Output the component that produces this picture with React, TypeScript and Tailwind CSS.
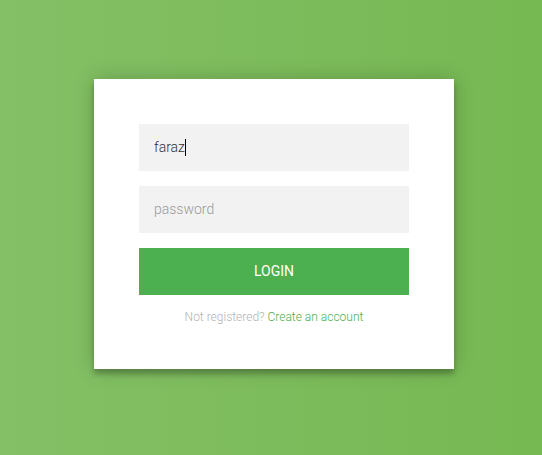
const App = () => {
  return (
    <div className="min-h-screen w-full bg-[linear-gradient(to_left,#76b852,#84c066)] pt-[79px] pl-[6px] flex justify-center items-start font-['Roboto',sans-serif] font-light">
      <div className="w-[360px] bg-white p-[45px] text-center shadow-[0_0_20px_0_rgba(0,0,0,0.2),0_5px_5px_0_rgba(0,0,0,0.24)]">
        {/* Username */}
        <div className="h-[47px] w-full bg-[#f2f2f2] px-[15px] flex items-center text-[14px] text-[#333] mb-[15px]">
          <span>faraz</span>
          <span className="inline-block w-px h-[17px] bg-black" />
        </div>

        {/* Password */}
        <div className="h-[47px] w-full bg-[#f2f2f2] px-[15px] flex items-center text-[14px] text-[#9a9a9a] mb-[15px]">
          password
        </div>

        <button
          type="button"
          className="h-[47px] w-full bg-[#4caf50] text-white text-[14px] font-normal uppercase"
        >
          Login
        </button>

        <p className="mt-[15px] text-[12px] leading-[14px] text-[#b3b3b3]">
          Not registered? <a href="#" className="text-[#4caf50]">Create an account</a>
        </p>
      </div>
    </div>
  );
};

export default App;
